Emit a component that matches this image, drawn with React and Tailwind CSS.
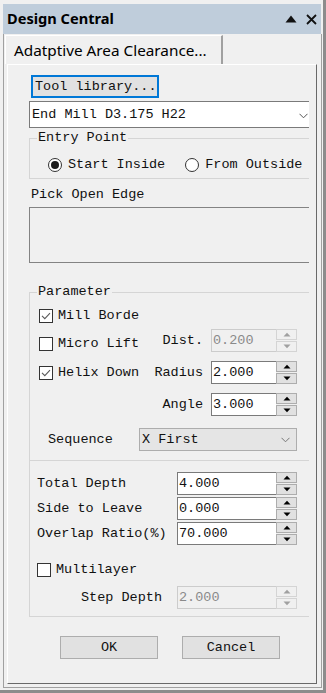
import React from 'react';

const mono = "font-['Liberation_Mono',monospace] text-[13.5px] leading-[16px] text-[#111]";

const Chevron = ({ color = '#555' }) => (
  <svg width="9" height="6" viewBox="0 0 9 6">
    <path d="M0.5 0.8 L4.5 4.8 L8.5 0.8" fill="none" stroke={color} strokeWidth="1" />
  </svg>
);

const Check = ({ checked }) => (
  <span className="w-[14px] h-[14px] border border-[#333333] bg-white flex items-center justify-center shrink-0">
    {checked && (
      <svg width="10" height="8" viewBox="0 0 10 8">
        <path d="M1 3.8 L3.8 6.6 L9 1.2" fill="none" stroke="#5a5a5a" strokeWidth="1.1" />
      </svg>
    )}
  </span>
);

const Radio = ({ checked }) => (
  <span className="w-[14px] h-[14px] rounded-full border border-[#333333] bg-white flex items-center justify-center shrink-0">
    {checked && <span className="w-[8px] h-[8px] rounded-full bg-[#1a1a1a]" />}
  </span>
);

const Arrow = ({ up, color }) => (
  <svg width="8" height="5" viewBox="0 0 8 5">
    <path d={up ? 'M0.5 4.5 L4 0.8 L7.5 4.5 Z' : 'M0.5 0.5 L4 4.2 L7.5 0.5 Z'} fill={color} />
  </svg>
);

// edit box with an up/down buddy on its right
const Spin = ({ value, disabled, className }) => (
  <div className={`flex h-[23px] ${className}`}>
    <div
      className={
        disabled
          ? 'flex-1 flex items-center pl-[1px] border-l border-t border-b border-[#cccccc] text-[#8a8a8a]'
          : 'flex-1 flex items-center pl-[1px] border-l border-t border-b border-[#7a7a7a] bg-white text-[#111]'
      }
    >
      <span className="font-['Liberation_Mono',monospace] text-[13.5px] leading-[16px]">{value}</span>
    </div>
    <div className="w-[21px] flex flex-col gap-[1px]">
      <div className={disabled ? 'flex-1 border border-[#d4d4d4] flex items-center justify-center' : 'flex-1 border border-[#adadad] bg-[#e1e1e1] flex items-center justify-center'}>
        <Arrow up color={disabled ? '#a0a0a0' : '#000'} />
      </div>
      <div className={disabled ? 'flex-1 border border-[#d4d4d4] flex items-center justify-center' : 'flex-1 border border-[#adadad] bg-[#e1e1e1] flex items-center justify-center'}>
        <Arrow color={disabled ? '#a0a0a0' : '#000'} />
      </div>
    </div>
  </div>
);

const LabeledSpin = ({ label, value, disabled }) => (
  <div className="flex items-center">
    <span className={`w-[54px] text-right mr-[8px] ${mono}`}>{label}</span>
    <Spin value={value} disabled={disabled} className="w-[86px]" />
  </div>
);

const DepthRow = ({ label, value, className = '' }) => (
  <div className={`flex items-center pl-[7px] ${className}`}>
    <span className={`w-[140px] ${mono}`}>{label}</span>
    <Spin value={value} className="w-[120px]" />
  </div>
);

export default function App() {
  return (
    <div className="w-[326px] h-[693px] bg-[#f0f0f0] flex flex-col pt-[4px] pl-[3px] border-r-[3px] border-b-[3px] border-[#8c8c8c] overflow-hidden">
      {/* title bar */}
      <div className="h-[30px] mr-[2px] bg-[#bfcddb] flex items-center pl-[4px] pr-[4px] shrink-0">
        <span className="font-['Noto_Sans',sans-serif] font-bold text-[14.6px] text-black">Design Central</span>
        <div className="ml-auto flex items-center gap-[9px]">
          <svg width="12" height="8" viewBox="0 0 12 8">
            <path d="M0.5 7.5 L6 0.5 L11.5 7.5 Z" fill="#111" />
          </svg>
          <svg width="11" height="11" viewBox="0 0 11 11">
            <path d="M1 1 L10 10 M10 1 L1 10" stroke="#111" strokeWidth="1.8" />
          </svg>
        </div>
      </div>

      {/* body */}
      <div className="flex-1 flex flex-col border-l border-r border-b border-[#a0a0a0] mr-[1px] mb-[2px]">
        <div className="h-[30px] shrink-0 flex items-end">
          <div className="ml-[1px] w-[218px] h-[29px] border-l border-t border-white border-r-2 border-r-[#a0a0a0] flex items-center pl-[8px]">
            <span className="font-['Noto_Sans',sans-serif] text-[15.3px] text-black whitespace-nowrap">Adatptive Area Clearance...</span>
          </div>
        </div>

        {/* tab page */}
        <div className="flex-1 ml-[3px] mr-[4px] mb-[3px] border-l border-t border-white border-r border-b border-r-[#696969] border-b-[#696969] pl-[21px]">
          <div className="w-[280px] overflow-hidden flex flex-col">
            <div className="mt-[10px] ml-[2px] w-[128px] h-[23px] border-2 border-[#0078d7] bg-[#e1e1e1] flex items-center pl-[2px]">
              <span className={mono}>Tool library...</span>
            </div>

            <div className="mt-[3px] w-[290px] h-[27px] border border-[#7a7a7a] bg-white flex items-center pl-[2px]">
              <span className={mono}>End Mill D3.175 H22</span>
              <span className="ml-[113px] mt-[2px]"><Chevron /></span>
            </div>

            <fieldset className="mt-[2px] w-[290px] border border-[#d5d5d5]">
              <legend className={`ml-[7px] px-[1px] ${mono}`}>Entry Point</legend>
              <div className="flex items-center mt-[12px] mb-[6px] pl-[18px] h-[14px]">
                <Radio checked />
                <span className={`ml-[6px] ${mono}`}>Start Inside</span>
                <span className="ml-[20px]"><Radio /></span>
                <span className={`ml-[6px] ${mono}`}>From Outside</span>
              </div>
            </fieldset>

            <span className={`mt-[8px] ml-[2px] ${mono}`}>Pick Open Edge</span>
            <div className="mt-[4px] w-[290px] h-[56px] border border-[#838383]" />

            <fieldset className="mt-[21px] w-[290px] border-t border-l border-[#d5d5d5]">
              <legend className={`ml-[7px] px-[1px] ${mono}`}>Parameter</legend>
              <div className="flex items-start">
                <div className="w-[119px] pl-[9px] flex flex-col">
                  <div className="mt-[8px] h-[16px] flex items-center gap-[5px]">
                    <Check checked />
                    <span className={`${mono} whitespace-nowrap`}>Mill Borde</span>
                  </div>
                  <div className="mt-[12px] h-[16px] flex items-center gap-[5px]">
                    <Check />
                    <span className={`${mono} whitespace-nowrap`}>Micro Lift</span>
                  </div>
                  <div className="mt-[13px] h-[16px] flex items-center gap-[5px]">
                    <Check checked />
                    <span className={`${mono} whitespace-nowrap`}>Helix Down</span>
                  </div>
                </div>
                <div className="mt-[29px] flex flex-col gap-[9px]">
                  <LabeledSpin label="Dist." value="0.200" disabled />
                  <LabeledSpin label="Radius" value="2.000" />
                  <LabeledSpin label="Angle" value="3.000" />
                </div>
              </div>
              <div className="mt-[12px] pl-[18px] flex items-center">
                <span className={`w-[91px] ${mono}`}>Sequence</span>
                <div className="w-[158px] h-[23px] border border-[#adadad] bg-[#e5e5e5] flex items-center pl-[2px] pr-[6px]">
                  <span className={mono}>X First</span>
                  <span className="ml-auto mt-[1px]"><Chevron color="#777" /></span>
                </div>
              </div>
              <div className="h-[9px]" />
            </fieldset>

            <div className="w-[290px] border-t border-l border-b border-[#d5d5d5] flex flex-col pb-[7px]">
              <DepthRow label="Total Depth" value="4.000" className="mt-[11px]" />
              <DepthRow label="Side to Leave" value="0.000" className="mt-[2px]" />
              <DepthRow label="Overlap Ratio(%)" value="70.000" className="mt-[2px]" />
              <div className="mt-[17px] h-[16px] pl-[7px] flex items-center gap-[5px]">
                <Check />
                <span className={mono}>Multilayer</span>
              </div>
              <div className="mt-[8px] pl-[51px] flex items-center">
                <span className={`w-[96px] ${mono}`}>Step Depth</span>
                <Spin value="2.000" disabled className="w-[120px]" />
              </div>
            </div>

            <div className="mt-[19px] pl-[31px] flex gap-[24px]">
              <div className="w-[98px] h-[23px] border border-[#adadad] bg-[#e1e1e1] flex items-center justify-center">
                <span className={mono}>OK</span>
              </div>
              <div className="w-[98px] h-[23px] border border-[#adadad] bg-[#e1e1e1] flex items-center justify-center">
                <span className={mono}>Cancel</span>
              </div>
            </div>
          </div>
        </div>
      </div>
    </div>
  );
}
